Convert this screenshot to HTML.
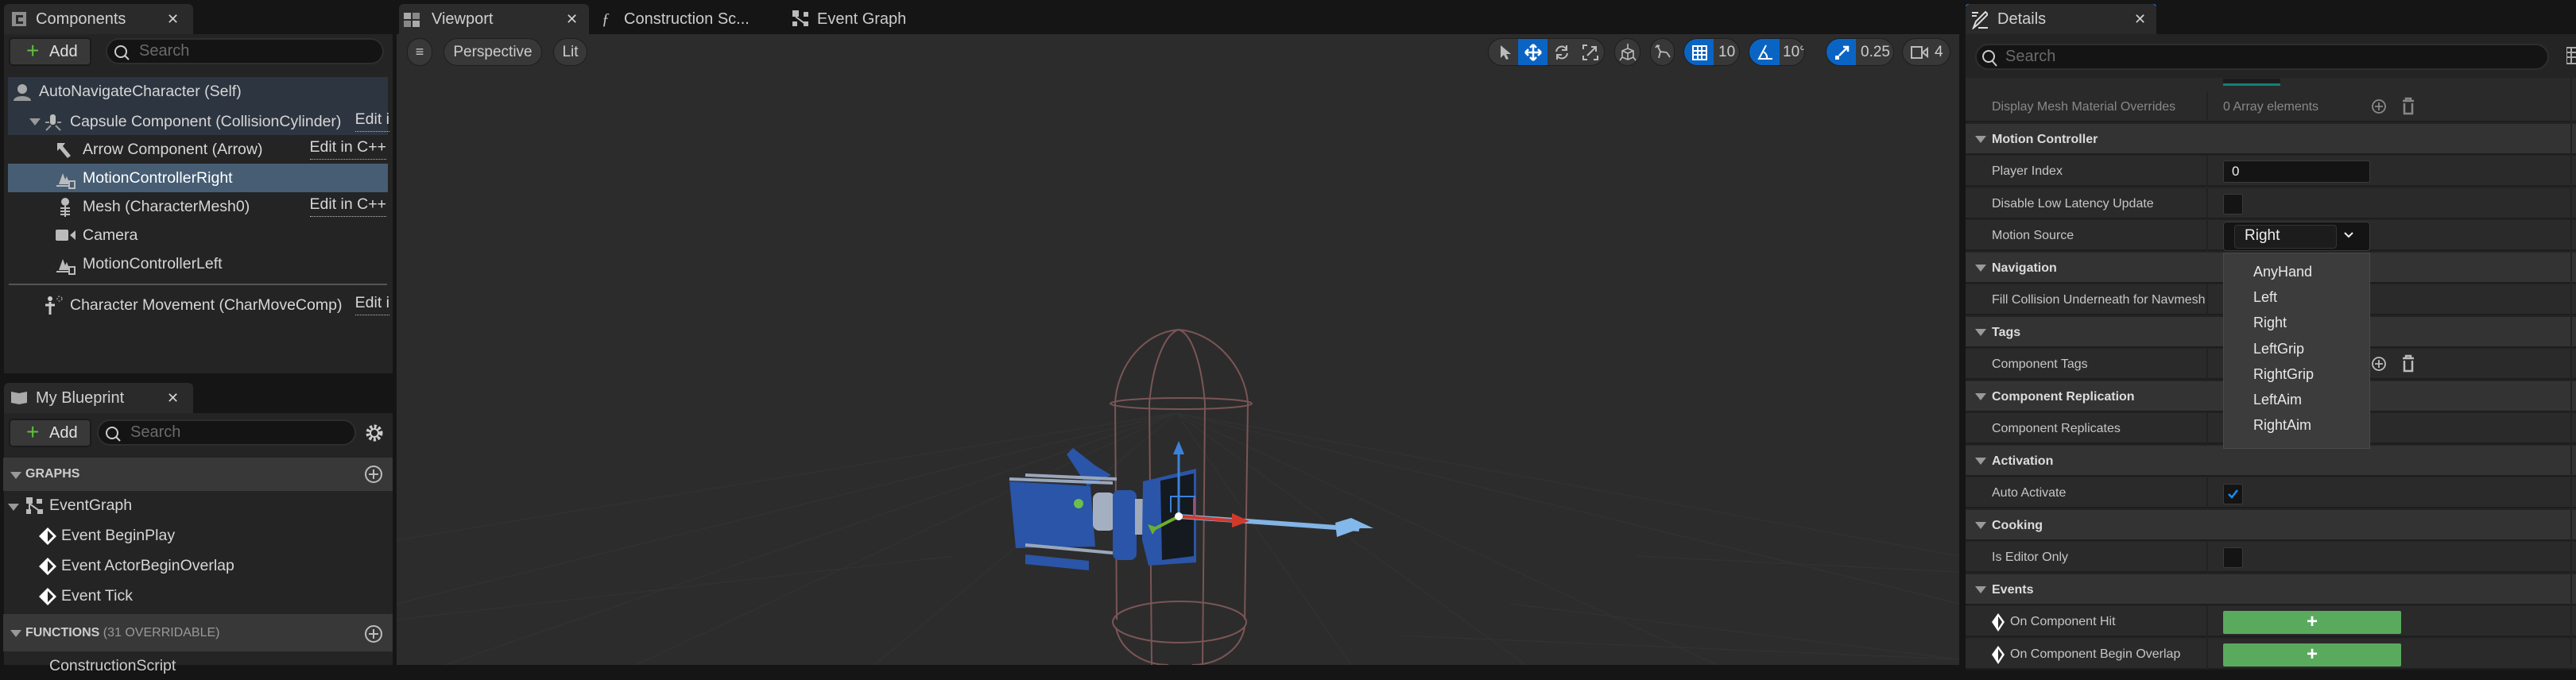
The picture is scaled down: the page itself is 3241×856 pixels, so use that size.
<!DOCTYPE html>
<html><head><meta charset="utf-8"><style>
*{box-sizing:border-box;margin:0;padding:0}
body{width:3241px;height:837px;background:#151515;overflow:hidden;position:relative;font-family:"Liberation Sans",sans-serif;color:#c8c8c8}
.a{position:absolute}
.tab{position:absolute;background:#2a2a2a;border-radius:6px 6px 0 0;color:#d0d0d0;font-size:20px;line-height:38px}
.row{position:absolute;left:10px;width:480px;height:36px;font-size:19.5px;line-height:36px;color:#d6d6d6;white-space:nowrap}
.edit{position:absolute;right:4px;top:0;border-bottom:1px dotted #bbb;line-height:30px}
.srch{position:absolute;background:#141414;border:2px solid #2e2e2e;border-radius:20px;color:#6a6a6a;font-size:20px}
.btn{position:absolute;background:#383838;border:2px solid #1b1b1b;border-radius:5px;color:#e0e0e0;font-size:20px}
.dr{position:absolute;left:2473px;width:768px;height:39px;background:#2a2a2a;border-bottom:2px solid #1e1e1e;font-size:16px;line-height:39px;color:#c6c6c6;white-space:nowrap}
.dh{background:#333;font-weight:bold;color:#dcdcdc}
.dr .l{position:absolute;left:33px}
.dr .cs{position:absolute;left:303px;top:0;width:2px;height:39px;background:#222}
.tri{position:absolute;width:0;height:0;border-left:7px solid transparent;border-right:7px solid transparent;border-top:9px solid #999}
.cb{position:absolute;left:2797px;width:25px;height:26px;background:#141414;border:1px solid #3a3a3a;border-radius:3px}
.tb{position:absolute;top:48px;height:35px;background:#383838;border:1px solid #1e1e1e;border-radius:18px;color:#ccc;font-size:19px;line-height:33px}
.blue{background:#0a64c4}
.dd{font-size:18px;color:#e8e8e8;position:absolute;left:2835px}
</style></head><body>

<!-- LEFT PANEL -->
<div class="a" style="left:5px;top:43px;width:489px;height:427px;background:#242424"></div>
<div class="tab" style="left:5px;top:5px;width:238px;height:38px">
 <svg class="a" style="left:8px;top:8px" width="22" height="22" viewBox="0 0 22 22"><path d="M2 2h18v18H2z" fill="#8c8c8c"/><path d="M7 6h9v3H10v5h6v3H7z" fill="#2a2a2a"/></svg>
 <span class="a" style="left:40px;top:0">Components</span><span class="a" style="left:205px;top:0;font-size:18px">✕</span></div>
<div class="btn" style="left:11px;top:47px;width:104px;height:36px;line-height:32px"><span style="color:#5fbf3a;font-size:28px;position:absolute;left:20px;top:-1px">+</span><span style="position:absolute;left:49px">Add</span></div>
<div class="srch" style="left:133px;top:48px;width:350px;height:33px;line-height:29px"><span class="a" style="left:40px">Search</span>
 <svg class="a" style="left:6px;top:4px" width="24" height="24"><circle cx="11" cy="11" r="7" stroke="#ccc" stroke-width="2" fill="none"/><path d="M16 16l5 5" stroke="#ccc" stroke-width="2"/></svg></div>
<div class="a" style="left:10px;top:97px;width:478px;height:73px;background:#2d3540"></div>
<div class="a" style="left:10px;top:206px;width:478px;height:36px;background:#465d74"></div>
<div class="row" style="top:97px;left:16px"><svg class="a" style="left:0;top:8px" width="24" height="22"><circle cx="12" cy="7" r="6" fill="#aaa"/><path d="M1 22c0-8 22-8 22 0z" fill="#999"/></svg><span style="position:absolute;left:33px">AutoNavigateCharacter (Self)</span></div>
<div class="row" style="top:135px"><span class="tri" style="left:27px;top:14px"></span><svg class="a" style="left:45px;top:7px" width="24" height="24"><rect x="8" y="2" width="7" height="13" rx="3" fill="#bbb"/><path d="M3 22l6-6M21 22l-6-6M2 12h5M17 12h5" stroke="#999" stroke-width="2"/></svg><span style="position:absolute;left:78px">Capsule Component (CollisionCylinder)</span><span class="edit" style="right:0">Edit i</span></div>
<div class="row" style="top:170px"><svg class="a" style="left:60px;top:8px" width="24" height="22"><path d="M2 2l0 10 3-3 10 12 4-3L9 6l3-4z" fill="#bbb"/></svg><span style="position:absolute;left:94px">Arrow Component (Arrow)</span><span class="edit">Edit in C++</span></div>
<div class="row" style="top:206px;color:#fff"><svg class="a" style="left:60px;top:8px" width="26" height="24"><path d="M4 18l5-14 3 8 2-4 4 10z" fill="#bbb"/><path d="M1 20h16" stroke="#bbb" stroke-width="2"/><rect x="17" y="14" width="7" height="9" fill="none" stroke="#bbb" stroke-width="2"/></svg><span style="position:absolute;left:94px">MotionControllerRight</span></div>
<div class="row" style="top:242px"><svg class="a" style="left:60px;top:6px" width="24" height="26"><circle cx="12" cy="6" r="5" fill="#bbb"/><path d="M6 14h12M6 18h12M6 22h12M12 11v14" stroke="#bbb" stroke-width="2"/></svg><span style="position:absolute;left:94px">Mesh (CharacterMesh0)</span><span class="edit">Edit in C++</span></div>
<div class="row" style="top:278px"><svg class="a" style="left:60px;top:10px" width="26" height="16"><rect x="0" y="1" width="16" height="14" rx="2" fill="#bbb"/><path d="M18 8l7-6v12z" fill="#bbb"/></svg><span style="position:absolute;left:94px">Camera</span></div>
<div class="row" style="top:314px"><svg class="a" style="left:60px;top:8px" width="26" height="24"><path d="M4 18l5-14 3 8 2-4 4 10z" fill="#bbb"/><path d="M1 20h16" stroke="#bbb" stroke-width="2"/><rect x="17" y="14" width="7" height="9" fill="none" stroke="#bbb" stroke-width="2"/></svg><span style="position:absolute;left:94px">MotionControllerLeft</span></div>
<div class="a" style="left:11px;top:357px;width:476px;height:2px;background:#555"></div>
<div class="row" style="top:366px"><svg class="a" style="left:45px;top:6px" width="26" height="26"><circle cx="8" cy="4" r="3" fill="#ccc"/><path d="M8 8v16M2 12h12" stroke="#ccc" stroke-width="3"/><circle cx="20" cy="4" r="3" fill="none" stroke="#ccc" stroke-dasharray="2 2"/></svg><span style="position:absolute;left:78px">Character Movement (CharMoveComp)</span><span class="edit" style="right:0">Edit i</span></div>

<div class="a" style="left:5px;top:520px;width:489px;height:317px;background:#242424"></div>
<div class="tab" style="left:5px;top:482px;width:238px;height:38px">
 <svg class="a" style="left:8px;top:9px" width="24" height="20"><path d="M1 2l10 2 10-2v14l-10 2-10-2z" fill="#aaa"/></svg>
 <span class="a" style="left:40px;top:0">My Blueprint</span><span class="a" style="left:205px;top:0;font-size:18px">✕</span></div>
<div class="btn" style="left:11px;top:527px;width:104px;height:36px;line-height:32px"><span style="color:#5fbf3a;font-size:28px;position:absolute;left:20px;top:-1px">+</span><span style="position:absolute;left:49px">Add</span></div>
<div class="srch" style="left:122px;top:528px;width:326px;height:33px;line-height:29px"><span class="a" style="left:40px">Search</span>
 <svg class="a" style="left:6px;top:4px" width="24" height="24"><circle cx="11" cy="11" r="7" stroke="#ccc" stroke-width="2" fill="none"/><path d="M16 16l5 5" stroke="#ccc" stroke-width="2"/></svg></div>
<svg class="a" style="left:458px;top:532px" width="26" height="26"><circle cx="13" cy="13" r="8" fill="none" stroke="#ccc" stroke-width="5" stroke-dasharray="3 2.3"/><circle cx="13" cy="13" r="5" fill="none" stroke="#ccc" stroke-width="2"/></svg>
<div class="a" style="left:4px;top:576px;width:490px;height:42px;background:#383838"></div>
<span class="tri" style="left:13px;top:594px"></span>
<div class="a" style="left:32px;top:576px;line-height:42px;font-size:16px;font-weight:bold;color:#ccc">GRAPHS</div>
<svg class="a" style="left:458px;top:585px" width="24" height="24"><circle cx="12" cy="12" r="10" fill="none" stroke="#bbb" stroke-width="2"/><path d="M12 6v12M6 12h12" stroke="#bbb" stroke-width="2"/></svg>
<div class="row" style="top:618px"><span class="tri" style="left:0;top:16px"></span><svg class="a" style="left:23px;top:8px" width="22" height="22"><rect x="0" y="0" width="8" height="8" fill="#bbb"/><rect x="13" y="2" width="7" height="6" fill="#bbb"/><rect x="0" y="15" width="6" height="6" fill="#bbb"/><rect x="14" y="15" width="7" height="6" fill="#bbb"/><path d="M4 8l14 10M4 8v8" stroke="#bbb" stroke-width="2"/></svg><span style="position:absolute;left:52px">EventGraph</span></div>
<div class="row" style="top:656px"><svg class="a" style="left:38px;top:7px" width="24" height="24"><path d="M12 1L23 12 12 23 1 12z" fill="#fff"/><path d="M12 5L19 12 12 19z" fill="#242424"/></svg><span style="position:absolute;left:67px">Event BeginPlay</span></div>
<div class="row" style="top:694px"><svg class="a" style="left:38px;top:7px" width="24" height="24"><path d="M12 1L23 12 12 23 1 12z" fill="#fff"/><path d="M12 5L19 12 12 19z" fill="#242424"/></svg><span style="position:absolute;left:67px">Event ActorBeginOverlap</span></div>
<div class="row" style="top:732px"><svg class="a" style="left:38px;top:7px" width="24" height="24"><path d="M12 1L23 12 12 23 1 12z" fill="#fff"/><path d="M12 5L19 12 12 19z" fill="#242424"/></svg><span style="position:absolute;left:67px">Event Tick</span></div>
<div class="a" style="left:4px;top:773px;width:490px;height:47px;background:#383838"></div>
<span class="tri" style="left:13px;top:793px"></span>
<div class="a" style="left:32px;top:773px;line-height:47px;font-size:16px;font-weight:bold;color:#ccc">FUNCTIONS <span style="font-weight:normal;color:#999">(31 OVERRIDABLE)</span></div>
<svg class="a" style="left:458px;top:786px" width="24" height="24"><circle cx="12" cy="12" r="10" fill="none" stroke="#bbb" stroke-width="2"/><path d="M12 6v12M6 12h12" stroke="#bbb" stroke-width="2"/></svg>
<div class="row" style="top:820px;left:32px;color:#ccc"><span style="position:absolute;left:30px">ConstructionScript</span></div>

<!-- VIEWPORT -->
<div class="a" style="left:499px;top:43px;width:1966px;height:794px;background:#2c2c2c"></div>
<div class="tab" style="left:502px;top:5px;width:239px;height:38px;background:#2c2c2c">
 <svg class="a" style="left:6px;top:11px" width="20" height="18"><rect x="0" y="0" width="9" height="8" fill="#aaa"/><rect x="11" y="0" width="9" height="8" fill="#888"/><rect x="0" y="10" width="9" height="8" fill="#888"/><rect x="11" y="10" width="9" height="8" fill="#aaa"/></svg>
 <span class="a" style="left:41px">Viewport</span><span class="a" style="left:210px;font-size:18px">✕</span></div>
<div class="a" style="left:757px;top:5px;line-height:38px;font-size:20px;color:#ccc"><i style="font-family:'Liberation Serif'">ƒ</i></div>
<div class="a" style="left:785px;top:5px;line-height:38px;font-size:20px;color:#ccc">Construction Sc...</div>
<svg class="a" style="left:997px;top:13px" width="20" height="20"><rect x="0" y="0" width="8" height="8" fill="#bbb"/><rect x="14" y="2" width="6" height="6" fill="#bbb"/><rect x="0" y="14" width="6" height="6" fill="#bbb"/><rect x="14" y="14" width="6" height="6" fill="#bbb"/><path d="M4 8l12 9" stroke="#bbb" stroke-width="2"/></svg>
<div class="a" style="left:1028px;top:5px;line-height:38px;font-size:20px;color:#ccc">Event Graph</div>
<div class="tb" style="left:512px;width:32px;text-align:center;font-size:18px">≡</div>
<div class="tb" style="left:558px;width:124px;text-align:center">Perspective</div>
<div class="tb" style="left:696px;width:43px;text-align:center">Lit</div>

<!-- viewport toolbar -->
<div class="tb" style="left:1872px;width:147px;overflow:hidden">
 <div class="a blue" style="left:37px;top:0;width:37px;height:35px"></div>
 <svg class="a" style="left:12px;top:7px" width="18" height="20"><path d="M3 1v16l4-4 3 6 3-1-3-6h6z" fill="#bbb"/></svg>
 <svg class="a" style="left:45px;top:6px" width="22" height="22"><path d="M11 1v20M1 11h20M11 1l-4 4M11 1l4 4M11 21l-4-4M11 21l4-4M1 11l4-4M1 11l4 4M21 11l-4-4M21 11l-4 4" stroke="#fff" stroke-width="2.5" fill="none"/></svg>
 <svg class="a" style="left:82px;top:7px" width="20" height="20"><path d="M3 9a7 7 0 0 1 13-3M17 11a7 7 0 0 1-13 3" stroke="#bbb" stroke-width="2" fill="none"/><path d="M16 1v6h-6M4 19v-6h6" stroke="#bbb" stroke-width="2" fill="none"/></svg>
 <svg class="a" style="left:118px;top:7px" width="20" height="20"><path d="M1 6V1h5M19 14v5h-5M1 14v5h5M6 14L17 3M11 3h6v6" stroke="#bbb" stroke-width="2" fill="none"/></svg>
</div>
<div class="tb" style="left:2031px;width:33px"><svg class="a" style="left:5px;top:5px" width="22" height="24"><path d="M11 1v6M4 10l7-3 7 3v8l-7 3-7-3zM4 10l7 3 7-3M11 13v8M4 18l-3 4M18 18l3 4" stroke="#bbb" stroke-width="1.6" fill="none"/></svg></div>
<div class="tb" style="left:2076px;width:31px"><svg class="a" style="left:4px;top:6px" width="22" height="22"><path d="M4 2l4 8 8 1M8 10l-2 8M16 11l4 6M4 2l-2 3M4 2l3 1" stroke="#bbb" stroke-width="1.8" fill="none"/></svg></div>
<div class="tb" style="left:2118px;width:71px;overflow:hidden"><div class="a blue" style="left:0;top:0;width:37px;height:35px"></div>
 <svg class="a" style="left:10px;top:8px" width="19" height="19"><rect x="1" y="1" width="17" height="17" fill="none" stroke="#fff" stroke-width="2"/><path d="M7 1v17M12 1v17M1 7h17M1 12h17" stroke="#fff" stroke-width="2"/></svg><span class="a" style="left:43px">10</span></div>
<div class="tb" style="left:2200px;width:71px;overflow:hidden"><div class="a blue" style="left:0;top:0;width:38px;height:35px"></div>
 <svg class="a" style="left:9px;top:7px" width="22" height="20"><path d="M12 1L3 18h17M8 9a8 8 0 0 1 5 9" stroke="#fff" stroke-width="2" fill="none"/></svg><span class="a" style="left:42px">10°</span></div>
<div class="tb" style="left:2297px;width:86px;overflow:hidden"><div class="a blue" style="left:0;top:0;width:37px;height:35px"></div>
 <svg class="a" style="left:10px;top:7px" width="20" height="20"><rect x="1" y="14" width="5" height="5" fill="#fff"/><path d="M6 14L17 3M11 3h6v6" stroke="#fff" stroke-width="2.5" fill="none"/></svg><span class="a" style="left:43px">0.25</span></div>
<div class="tb" style="left:2393px;width:61px"><svg class="a" style="left:10px;top:9px" width="22" height="16"><rect x="1" y="1" width="13" height="14" fill="none" stroke="#bbb" stroke-width="2"/><path d="M15 8l6-5v10z" fill="none" stroke="#bbb" stroke-width="2"/></svg><span class="a" style="left:40px">4</span></div>

<!-- scene -->
<svg class="a" style="left:499px;top:43px" width="1966" height="794" viewBox="499 43 1966 794">
 <g stroke="#313131" stroke-width="1.5" fill="none">
  <path d="M1480 520L2160 837M1480 520L2465 760M1480 520L2465 700M1480 520L1920 837M1480 520L1700 837M1480 520L1100 837M1480 520L800 837M1480 520L560 837M1480 520L499 760M1480 520L499 680M2060 700L2465 720M1760 800L2465 830M499 780L1200 700M1900 760L2465 830"/>
 </g>
 <g stroke="#7a5556" stroke-width="2" fill="none">
  <path d="M1403 508C1405 460 1440 418 1483 415C1526 418 1567 460 1570 508"/>
  <path d="M1446 508C1450 460 1465 420 1483 415C1500 420 1512 460 1516 508"/>
  <ellipse cx="1486" cy="508" rx="89" ry="7"/>
  <path d="M1403 508L1405 780M1570 508L1566 780M1446 508L1449 837M1516 508L1513 837"/>
  <ellipse cx="1484" cy="783" rx="84" ry="26"/>
  <path d="M1404 790C1410 820 1440 837 1470 837M1566 790C1560 820 1530 837 1500 837"/>
 </g>
 <!-- camera -->
 <path d="M1342 572l8-8 28 22 20 12-30 14z" fill="#2a55a8"/>
 <path d="M1270 606L1372 612 1378 688 1278 690z" fill="#2a55a8"/>
 <path d="M1290 698l80 8 0 12-80-8z" fill="#2a55a8"/>
 <path d="M1270 603l130 5M1290 598l115 5M1290 686l110 10" stroke="#9aa7bb" stroke-width="4"/>
 <circle cx="1357" cy="634" r="6" fill="#6cbf4a"/>
 <rect x="1375" y="620" width="28" height="48" rx="8" fill="#a4b0c2"/>
 <rect x="1400" y="617" width="30" height="88" rx="8" fill="#2a55a8"/>
 <rect x="1428" y="628" width="14" height="45" fill="#a0aabb"/>
 <path d="M1438 606L1505 590V708L1445 712 1437 680z" fill="#2a55a8"/>
 <path d="M1460 605L1502 596V700L1462 705z" fill="#151a20"/>
 <!-- gizmo -->
 <path d="M1483 650L1710 666" stroke="#82b4e6" stroke-width="6"/>
 <path d="M1700 652L1680 658 1682 676 1712 665 1728 665z" fill="#82b8ea"/>
 <path d="M1483 650L1560 656" stroke="#d03a2a" stroke-width="4"/>
 <path d="M1550 646L1572 656 1550 664z" fill="#d03a2a"/>
 <path d="M1483 650V560" stroke="#3b82d8" stroke-width="3"/>
 <path d="M1476 572L1483 555 1490 572z" fill="#3b82d8"/>
 <path d="M1483 650L1450 667" stroke="#6bb030" stroke-width="4"/>
 <path d="M1444 660l12 4-6 9z" fill="#6bb030"/>
 <path d="M1473 645v-20h30v25" stroke="#3b82d8" stroke-width="2" fill="none"/>
 <path d="M1502 627v25" stroke="#d03a2a" stroke-width="2"/>
 <circle cx="1483" cy="650" r="5" fill="#fff"/>
</svg>

<!-- DETAILS -->
<div class="a" style="left:2473px;top:43px;width:768px;height:794px;background:#242424"></div>
<div class="a" style="left:2473px;top:5px;width:240px;height:3px;background:#1a70c8;border-radius:3px 3px 0 0"></div>
<div class="tab" style="left:2473px;top:5px;width:240px;height:38px;font-size:20px">
 <svg class="a" style="left:6px;top:8px" width="22" height="24"><path d="M2 3h8M2 7h6M4 22l3-8 12-12 3 3-12 12z" stroke="#ddd" stroke-width="2" fill="none"/><path d="M10 22h12" stroke="#ddd" stroke-width="2"/></svg>
 <span class="a" style="left:40px">Details</span><span class="a" style="left:212px;font-size:18px">✕</span></div>
<div class="srch" style="left:2485px;top:55px;width:722px;height:33px;line-height:29px"><span class="a" style="left:36px">Search</span>
 <svg class="a" style="left:4px;top:4px" width="24" height="24"><circle cx="11" cy="10" r="7" stroke="#ccc" stroke-width="2" fill="none"/><path d="M15 15l6 7" stroke="#ccc" stroke-width="2"/></svg></div>
<svg class="a" style="left:3229px;top:58px" width="12" height="24"><rect x="0" y="2" width="14" height="20" fill="none" stroke="#aaa" stroke-width="2"/><path d="M0 8h14M0 14h14M6 2v20" stroke="#aaa" stroke-width="2"/></svg>
<div class="a" style="left:2473px;top:98px;width:768px;height:17px;background:#2a2a2a"></div>
<div class="a" style="left:2797px;top:99px;width:72px;height:9px;background:#1c1c1c;border-bottom:3px solid #12807a"></div>

<div class="dr" style="top:115px"><span class="l" style="color:#888">Display Mesh Material Overrides</span><span class="cs"></span><span class="a" style="left:324px;color:#888">0 Array elements</span>
 <svg class="a" style="left:510px;top:9px" width="20" height="20"><circle cx="10" cy="10" r="8" fill="none" stroke="#888" stroke-width="1.8"/><path d="M10 5v10M5 10h10" stroke="#888" stroke-width="1.8"/></svg>
 <svg class="a" style="left:549px;top:7px" width="16" height="24"><path d="M1 5h14M5 5V2h6v3M3 8v13h10V8" stroke="#888" stroke-width="2.5" fill="none"/></svg></div>
<div class="dr dh" style="top:155.5px"><span class="tri" style="left:12px;top:15px"></span><span class="l">Motion Controller</span></div>
<div class="dr" style="top:196px"><span class="l">Player Index</span><span class="cs"></span></div>
<div class="a" style="left:2797px;top:202px;width:185px;height:28px;background:#141414;border:1px solid #3a3a3a;border-radius:3px;color:#eee;font-size:17px;line-height:26px;padding-left:10px">0</div>
<div class="dr" style="top:236.5px"><span class="l">Disable Low Latency Update</span><span class="cs"></span></div>
<div class="cb" style="top:244px"></div>
<div class="dr" style="top:277px"><span class="l">Motion Source</span><span class="cs"></span></div>
<div class="a" style="left:2797px;top:279px;width:185px;height:37px;background:#141414;border:1px solid #3a3a3a;border-radius:4px"></div>
<div class="a" style="left:2811px;top:283px;width:129px;height:30px;background:#1c1c1c;border:1px solid #333;border-radius:4px;color:#eee;font-size:19px;line-height:26px;padding-left:12px">Right</div>
<svg class="a" style="left:2948px;top:291px" width="14" height="10"><path d="M2 2l5 5 5-5" stroke="#eee" stroke-width="2" fill="none"/></svg>
<div class="dr dh" style="top:317.5px"><span class="tri" style="left:12px;top:15px"></span><span class="l">Navigation</span></div>
<div class="dr" style="top:358px"><span class="l">Fill Collision Underneath for Navmesh</span><span class="cs"></span></div>
<div class="dr dh" style="top:398.5px"><span class="tri" style="left:12px;top:15px"></span><span class="l">Tags</span></div>
<div class="dr" style="top:439px"><span class="l">Component Tags</span><span class="cs"></span>
 <svg class="a" style="left:510px;top:9px" width="20" height="20"><circle cx="10" cy="10" r="8" fill="none" stroke="#bbb" stroke-width="1.8"/><path d="M10 5v10M5 10h10" stroke="#bbb" stroke-width="1.8"/></svg>
 <svg class="a" style="left:549px;top:7px" width="16" height="24"><path d="M1 5h14M5 5V2h6v3M3 8v13h10V8" stroke="#bbb" stroke-width="2.5" fill="none"/></svg></div>
<div class="dr dh" style="top:479.5px"><span class="tri" style="left:12px;top:15px"></span><span class="l">Component Replication</span></div>
<div class="dr" style="top:520px"><span class="l">Component Replicates</span><span class="cs"></span></div>
<div class="dr dh" style="top:560.5px"><span class="tri" style="left:12px;top:15px"></span><span class="l">Activation</span></div>
<div class="dr" style="top:601px"><span class="l">Auto Activate</span><span class="cs"></span></div>
<div class="cb" style="top:609px"><svg class="a" style="left:5px;top:6px" width="13" height="12"><path d="M1 6l4 4 7-9" stroke="#1a8cf0" stroke-width="2.5" fill="none"/></svg></div>
<div class="dr dh" style="top:641.5px"><span class="tri" style="left:12px;top:15px"></span><span class="l">Cooking</span></div>
<div class="dr" style="top:682px"><span class="l">Is Editor Only</span><span class="cs"></span></div>
<div class="cb" style="top:689px"></div>
<div class="dr dh" style="top:722.5px"><span class="tri" style="left:12px;top:15px"></span><span class="l">Events</span></div>
<div class="dr" style="top:763px"><svg class="a" style="left:33px;top:9px" width="16" height="23"><path d="M8 0L16 11 8 23 0 11z" fill="#fff"/><path d="M8 4L13 11 8 19z" fill="#2a2a2a"/></svg><span class="l" style="left:56px">On Component Hit</span><span class="cs"></span>
 <div class="a" style="left:324px;top:6px;width:224px;height:29px;background:#5aaa5e;border-radius:2px;color:#fff;font-size:24px;line-height:28px;text-align:center;font-weight:bold">+</div></div>
<div class="dr" style="top:803.5px"><svg class="a" style="left:33px;top:9px" width="16" height="23"><path d="M8 0L16 11 8 23 0 11z" fill="#fff"/><path d="M8 4L13 11 8 19z" fill="#2a2a2a"/></svg><span class="l" style="left:56px">On Component Begin Overlap</span><span class="cs"></span>
 <div class="a" style="left:324px;top:6px;width:224px;height:29px;background:#5aaa5e;border-radius:2px;color:#fff;font-size:24px;line-height:28px;text-align:center;font-weight:bold">+</div></div>
<div class="a" style="left:3234px;top:98px;width:2px;height:739px;background:#222"></div>

<!-- dropdown -->
<div class="a" style="left:2797px;top:318px;width:185px;height:247px;background:#3c3c3c;border:1px solid #4a4a4a"></div>
<div class="dd" style="top:332px">AnyHand</div>
<div class="dd" style="top:364px">Left</div>
<div class="dd" style="top:396px">Right</div>
<div class="dd" style="top:429px">LeftGrip</div>
<div class="dd" style="top:461px">RightGrip</div>
<div class="dd" style="top:493px">LeftAim</div>
<div class="dd" style="top:525px">RightAim</div>
</body></html>
